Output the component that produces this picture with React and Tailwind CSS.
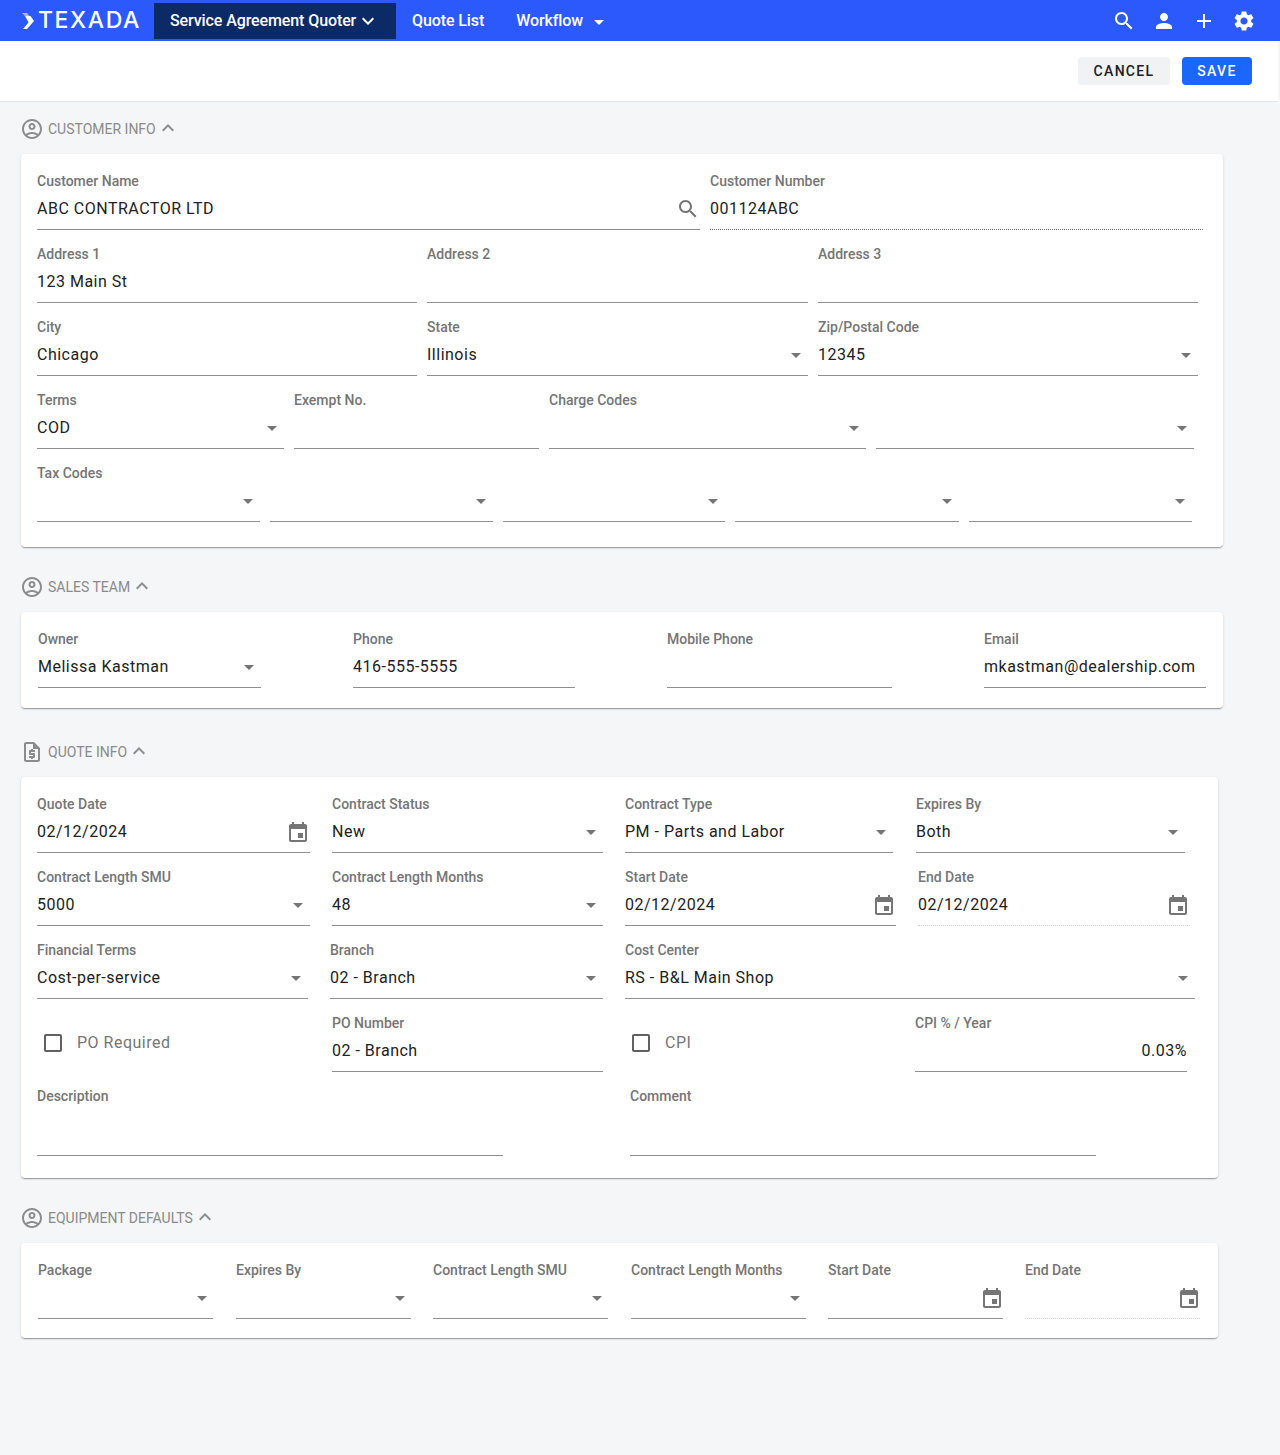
const ICONS = {
  search: "M15.5 14h-.79l-.28-.27C15.41 12.59 16 11.11 16 9.5 16 5.91 13.09 3 9.5 3S3 5.91 3 9.5 5.91 16 9.5 16c1.61 0 3.09-.59 4.23-1.57l.27.28v.79l5 4.99L20.49 19l-4.99-5zm-6 0C7.01 14 5 11.99 5 9.5S7.01 5 9.5 5 14 7.01 14 9.5 11.99 14 9.5 14z",
  person: "M12 12c2.21 0 4-1.79 4-4s-1.79-4-4-4-4 1.79-4 4 1.79 4 4 4zm0 2c-2.67 0-8 1.34-8 4v2h16v-2c0-2.66-5.33-4-8-4z",
  add: "M19 13h-6v6h-2v-6H5v-2h6V5h2v6h6v2z",
  settings: "M19.14 12.94c.04-.3.06-.61.06-.94 0-.32-.02-.64-.07-.94l2.03-1.58c.18-.14.23-.41.12-.61l-1.92-3.32c-.12-.22-.37-.29-.59-.22l-2.39.96c-.5-.38-1.03-.7-1.62-.94l-.36-2.54c-.04-.24-.24-.41-.48-.41h-3.84c-.24 0-.43.17-.47.41l-.36 2.54c-.59.24-1.13.57-1.62.94l-2.39-.96c-.22-.08-.47 0-.59.22L2.74 8.87c-.12.21-.08.47.12.61l2.03 1.58c-.05.3-.09.63-.09.94s.02.64.07.94l-2.03 1.58c-.18.14-.23.41-.12.61l1.92 3.32c.12.22.37.29.59.22l2.39-.96c.5.38 1.03.7 1.62.94l.36 2.54c.05.24.24.41.48.41h3.84c.24 0 .44-.17.47-.41l.36-2.54c.59-.24 1.13-.56 1.62-.94l2.39.96c.22.08.47 0 .59-.22l1.92-3.32c.12-.22.07-.47-.12-.61l-2.01-1.58zM12 15.6c-1.98 0-3.6-1.62-3.6-3.6s1.62-3.6 3.6-3.6 3.6 1.62 3.6 3.6-1.62 3.6-3.6 3.6z",
  event: "M17 12h-5v5h5v-5zM16 1v2H8V1H6v2H5c-1.11 0-1.99.9-1.99 2L3 19c0 1.1.89 2 2 2h14c1.1 0 2-.9 2-2V5c0-1.1-.9-2-2-2h-1V1h-2zm3 18H5V8h14v11z",
  account: "M12 2C6.48 2 2 6.48 2 12s4.48 10 10 10 10-4.48 10-10S17.52 2 12 2zM7.35 18.5C8.66 17.56 10.26 17 12 17s3.34.56 4.65 1.5C15.34 19.44 13.74 20 12 20s-3.34-.56-4.65-1.5zm10.79-1.38C16.45 15.8 14.32 15 12 15s-4.45.8-6.14 2.12C4.7 15.73 4 13.95 4 12c0-4.42 3.58-8 8-8s8 3.58 8 8c0 1.95-.7 3.73-1.86 5.12zM12 6c-1.93 0-3.5 1.57-3.5 3.5S10.07 13 12 13s3.5-1.57 3.5-3.5S13.93 6 12 6zm0 5c-.83 0-1.5-.67-1.5-1.5S11.17 8 12 8s1.5.67 1.5 1.5S12.83 11 12 11z",
  quote: "M14 2H6c-1.1 0-1.99.9-1.99 2L4 20c0 1.1.89 2 1.99 2H18c1.1 0 2-.9 2-2V8l-6-6zM6 20V4h7v5h5v11H6zM15 12h-4v1h3c.55 0 1 .45 1 1v3c0 .55-.45 1-1 1h-1v1h-2v-1H9v-2h4v-1h-3c-.55 0-1-.45-1-1v-3c0-.55.45-1 1-1h1V9h2v1h2v2z",
  less: "M12 8l-6 6 1.41 1.41L12 10.83l4.59 4.58L18 14z",
  more: "M16.59 8.59L12 13.17 7.41 8.59 6 10l6 6 6-6z",
  arrow: "M7 10l5 5 5-5z",
  checkbox: "M19 5v14H5V5h14m0-2H5c-1.1 0-2 .9-2 2v14c0 1.1.9 2 2 2h14c1.1 0 2-.9 2-2V5c0-1.1-.9-2-2-2z",
};

function Icon({ name, className = "" }) {
  return (
    <svg viewBox="0 0 24 24" fill="currentColor" className={`shrink-0 ${className || "w-6 h-6"}`}>
      <path fillRule={name === "quote" ? "evenodd" : "nonzero"} d={ICONS[name]} />
    </svg>
  );
}

function Field({ label, value, type, dotted, faint, right, tall, nudge, className = "" }) {
  const icon = { select: "arrow", date: "event", search: "search" }[type];
  return (
    <div className={`shrink-0 ${className}`}>
      <div className="h-5 text-sm leading-5 font-medium text-[#757575] whitespace-nowrap">{label}</div>
      <div
        className={`flex items-start pt-[6px] border-b ${tall ? "h-[50px]" : "h-[39px]"} ${
          faint ? "border-dotted border-[#cfcfcf]" : dotted ? "border-dotted border-[#757575]" : "border-[#8f8f8f]"
        }`}
      >
        <div className={`flex-1 text-base leading-6 tracking-[0.5px] text-[#212121] whitespace-nowrap ${right ? "text-right" : ""}`}>
          {value}
        </div>
        {icon && (
          <Icon
            name={icon}
            className={`w-6 h-6 text-[#757575] ${nudge ? "-mr-px" : ""} ${type === "date" ? "mt-px" : ""}`}
          />
        )}
      </div>
    </div>
  );
}

function CheckField({ label, className = "" }) {
  return (
    <div className={`shrink-0 h-[59px] pt-px flex items-center ${className}`}>
      <Icon name="checkbox" className="w-6 h-6 text-[#616161]" />
      <span className="ml-3 text-base tracking-[0.5px] text-[#757575]">{label}</span>
    </div>
  );
}

function SectionHeader({ icon, title, className = "" }) {
  return (
    <div className={`flex items-center h-6 mb-[13px] ml-5 text-[#8c8c8c] ${className}`}>
      <Icon name={icon} />
      <span className="ml-[4px] text-sm text-[#8a8a8a]">{title}</span>
      <Icon name="less" className="w-6 h-6 -mt-[3px]" />
    </div>
  );
}

function Card({ className = "", children }) {
  return (
    <div
      className={`ml-[21px] bg-white rounded shadow-[0_2px_1px_-1px_rgba(0,0,0,0.2),0_1px_1px_0_rgba(0,0,0,0.14),0_1px_3px_0_rgba(0,0,0,0.12)] ${className}`}
    >
      {children}
    </div>
  );
}

function Row({ children }) {
  return <div className="flex mb-[14px] last:mb-0">{children}</div>;
}

export default function App() {
  return (
    <div className="min-h-[1455px] bg-[#f5f6f8] font-['Roboto',sans-serif]">
      {/* top nav */}
      <div className="h-[41px] bg-[#2b59fb] flex items-start text-white">
        <div className="w-[154px] h-[41px] pl-[22px] flex items-center">
          <svg viewBox="0 0 12 16" className="w-[12px] h-[16px] shrink-0">
            <path d="M3 3h5.500L12 8l-7 8H1l5.500-6.500z" fill="#fff" />
            <path d="M0 0h5l2.500 3H3z" fill="#b4b8c4" />
          </svg>
          <span className="ml-[4px] font-['Inter',sans-serif] text-[23px] leading-none font-medium tracking-[1.6px]">TEXADA</span>
        </div>
        <div className="mt-[3px] h-9 w-[242px] bg-[#0b2a66] pl-4 flex items-center font-medium tracking-[-0.1px]">
          <span className="text-base">Service Agreement Quoter</span>
          <Icon name="more" className="w-6 h-6" />
        </div>
        <div className="mt-[3px] h-9 flex items-center ml-4 font-medium text-base tracking-[-0.1px]">Quote List</div>
        <div className="mt-[3px] h-9 flex items-center ml-8 font-medium text-base tracking-[-0.1px]">
          Workflow
          <Icon name="arrow" className="w-6 h-6 ml-[4px] mt-px" />
        </div>
        <div className="ml-auto h-[41px] pr-6 flex items-center gap-4">
          <Icon name="search" />
          <Icon name="person" />
          <Icon name="add" />
          <Icon name="settings" />
        </div>
      </div>

      {/* action bar */}
      <div className="w-[1278px] h-[61px] bg-white border-b border-[#e3e4e7] pt-4 pr-[26px] flex justify-end items-start gap-3">
        <button className="w-[92px] h-7 rounded bg-[#f1f2f4] text-sm font-medium tracking-[1.3px] text-[#212121]">CANCEL</button>
        <button className="w-[70px] h-7 rounded bg-[#1a66ff] text-sm font-medium tracking-[1.3px] text-white">SAVE</button>
      </div>

      {/* customer info */}
      <SectionHeader icon="account" title="CUSTOMER INFO" className="mt-[15px]" />
      <Card className="w-[1202px] pl-4 pt-[17px] pb-[25px]">
        <Row>
          <Field label="Customer Name" value="ABC CONTRACTOR LTD" type="search" className="w-[663px]" />
          <Field label="Customer Number" value="001124ABC" dotted className="w-[493px] ml-[10px]" />
        </Row>
        <Row>
          <Field label="Address 1" value="123 Main St" className="w-[380px]" />
          <Field label="Address 2" className="w-[381px] ml-[10px]" />
          <Field label="Address 3" className="w-[380px] ml-[10px]" />
        </Row>
        <Row>
          <Field label="City" value="Chicago" className="w-[380px]" />
          <Field label="State" value="Illinois" type="select" className="w-[381px] ml-[10px]" />
          <Field label="Zip/Postal Code" value="12345" type="select" className="w-[380px] ml-[10px]" />
        </Row>
        <Row>
          <Field label="Terms" value="COD" type="select" className="w-[247px]" />
          <Field label="Exempt No." className="w-[245px] ml-[10px]" />
          <Field label="Charge Codes" type="select" className="w-[317px] ml-[10px]" />
          <Field label="" type="select" className="w-[318px] ml-[10px]" />
        </Row>
        <Row>
          <Field label="Tax Codes" type="select" className="w-[223px]" />
          <Field label="" type="select" className="w-[223px] ml-[10px]" />
          <Field label="" type="select" className="w-[222px] ml-[10px]" />
          <Field label="" type="select" className="w-[224px] ml-[10px]" />
          <Field label="" type="select" className="w-[223px] ml-[10px]" />
        </Row>
      </Card>

      {/* sales team */}
      <SectionHeader icon="account" title="SALES TEAM" className="mt-7" />
      <Card className="w-[1202px] pl-[17px] pt-[17px] pb-5">
        <Row>
          <Field label="Owner" value="Melissa Kastman" type="select" className="w-[223px]" />
          <Field label="Phone" value="416-555-5555" className="w-[222px] ml-[92px]" />
          <Field label="Mobile Phone" className="w-[225px] ml-[92px]" />
          <Field label="Email" value="mkastman@dealership.com" className="w-[222px] ml-[92px]" />
        </Row>
      </Card>

      {/* quote info */}
      <SectionHeader icon="quote" title="QUOTE INFO" className="mt-8" />
      <Card className="w-[1197px] pl-4 pt-[17px] pb-[22px]">
        <Row>
          <Field label="Quote Date" value="02/12/2024" type="date" className="w-[273px]" />
          <Field label="Contract Status" value="New" type="select" className="w-[271px] ml-[22px]" />
          <Field label="Contract Type" value="PM - Parts and Labor" type="select" className="w-[268px] ml-[22px]" />
          <Field label="Expires By" value="Both" type="select" className="w-[269px] ml-[23px]" />
        </Row>
        <Row>
          <Field label="Contract Length SMU" value="5000" type="select" className="w-[273px]" />
          <Field label="Contract Length Months" value="48" type="select" className="w-[271px] ml-[22px]" />
          <Field label="Start Date" value="02/12/2024" type="date" className="w-[271px] ml-[22px]" />
          <Field label="End Date" value="02/12/2024" type="date" faint className="w-[272px] ml-[22px]" />
        </Row>
        <Row>
          <Field label="Financial Terms" value="Cost-per-service" type="select" className="w-[271px]" />
          <Field label="Branch" value="02 - Branch" type="select" className="w-[273px] ml-[22px]" />
          <Field label="Cost Center" value="RS - B&L Main Shop" type="select" className="w-[570px] ml-[22px]" />
        </Row>
        <Row>
          <CheckField label="PO Required" className="w-[295px] pl-1" />
          <Field label="PO Number" value="02 - Branch" className="w-[271px]" />
          <CheckField label="CPI" className="w-[290px] pl-1 ml-[22px]" />
          <Field label="CPI % / Year" value="0.03%" right className="w-[272px]" />
        </Row>
        <Row>
          <Field label="Description" tall className="w-[466px]" />
          <Field label="Comment" tall className="w-[466px] ml-[127px]" />
        </Row>
      </Card>

      {/* equipment defaults */}
      <SectionHeader icon="account" title="EQUIPMENT DEFAULTS" className="mt-7" />
      <Card className="w-[1197px] pl-[17px] pt-[17px] pb-[19px]">
        <Row>
          <Field label="Package" type="select" nudge className="w-[175px]" />
          <Field label="Expires By" type="select" nudge className="w-[175px] ml-[23px]" />
          <Field label="Contract Length SMU" type="select" nudge className="w-[175px] ml-[22px]" />
          <Field label="Contract Length Months" type="select" nudge className="w-[175px] ml-[23px]" />
          <Field label="Start Date" type="date" nudge className="w-[175px] ml-[22px]" />
          <Field label="End Date" type="date" faint nudge className="w-[175px] ml-[22px]" />
        </Row>
      </Card>
    </div>
  );
}
